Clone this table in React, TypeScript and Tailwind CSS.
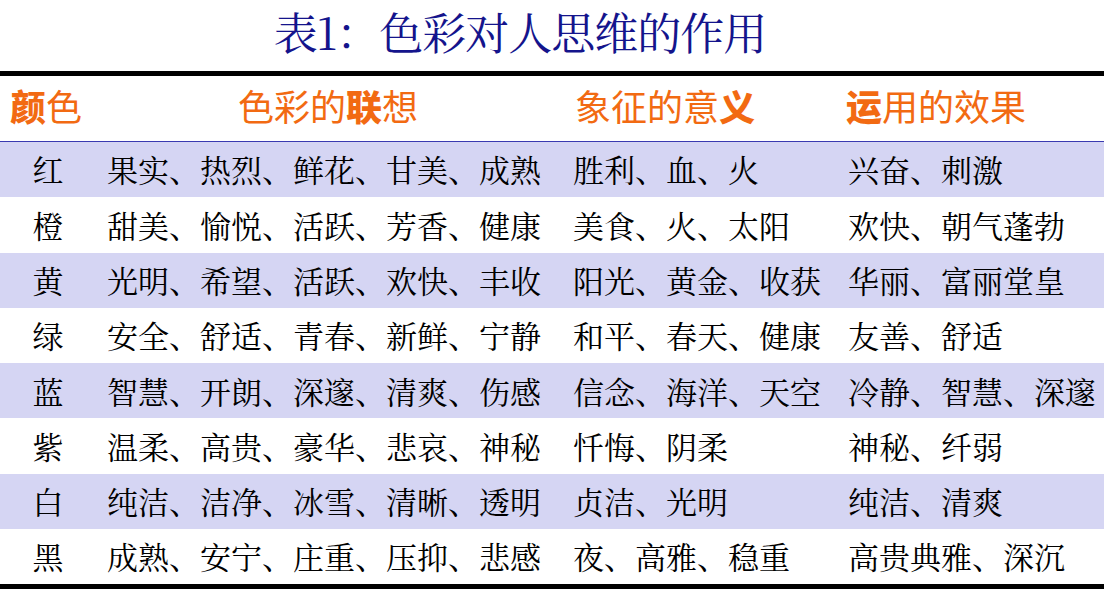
const rows: [string, string, string, string][] = [
  ["红", "果实、热烈、鲜花、甘美、成熟", "胜利、血、火", "兴奋、刺激"],
  ["橙", "甜美、愉悦、活跃、芳香、健康", "美食、火、太阳", "欢快、朝气蓬勃"],
  ["黄", "光明、希望、活跃、欢快、丰收", "阳光、黄金、收获", "华丽、富丽堂皇"],
  ["绿", "安全、舒适、青春、新鲜、宁静", "和平、春天、健康", "友善、舒适"],
  ["蓝", "智慧、开朗、深邃、清爽、伤感", "信念、海洋、天空", "冷静、智慧、深邃"],
  ["紫", "温柔、高贵、豪华、悲哀、神秘", "忏悔、阴柔", "神秘、纤弱"],
  ["白", "纯洁、洁净、冰雪、清晰、透明", "贞洁、光明", "纯洁、清爽"],
  ["黑", "成熟、安宁、庄重、压抑、悲感", "夜、高雅、稳重", "高贵典雅、深沉"],
];

const serif = "font-['Noto_Serif_CJK_SC','Liberation_Serif','Noto_Sans_CJK_SC',serif]";
const sans = "font-['Noto_Sans_CJK_SC','Noto_Sans',sans-serif]";
const cols = "grid grid-cols-[100px_466px_275px_1fr]";

export default function App() {
  return (
    <div className="w-[1104px] h-[595px] bg-white overflow-hidden">
      <div className={`h-[71px] flex items-center justify-center pr-[64px] pb-[8px] text-[44px] leading-[1.3] text-[#14148c] tracking-[-1px] ${serif}`}>
        <span>表1：色彩对人思维的作用</span>
      </div>
      <div className="h-[5px] bg-black" />
      <div className={`${cols} h-[66px] items-center pb-[6px] border-b border-[#3a3ab0] text-[36px] leading-[1.3] text-[#f26a12] ${sans}`}>
        <div className="pl-[10px]">
          <b className="font-black">颜</b>色
        </div>
        <div className="pl-[138px]">
          色彩的<b className="font-black">联</b>想
        </div>
        <div className="pl-[9px]">
          象征的意<b className="font-black">义</b>
        </div>
        <div className="pl-[5px]">
          <b className="font-black">运</b>用的效果
        </div>
      </div>
      {rows.map((r, i) => (
        <div
          key={r[0]}
          className={`${cols} h-[55.3px] items-center text-[31px] text-black whitespace-nowrap ${serif} ${
            i % 2 === 0 ? "bg-[#d5d5f3]" : "bg-white"
          }`}
        >
          <div className="pr-[4px] text-center">{r[0]}</div>
          <div className="pl-[7px]">{r[1]}</div>
          <div className="pl-[7px]">{r[2]}</div>
          <div className="pl-[7px]">{r[3]}</div>
        </div>
      ))}
      <div className="h-[5px] bg-black" />
    </div>
  );
}
